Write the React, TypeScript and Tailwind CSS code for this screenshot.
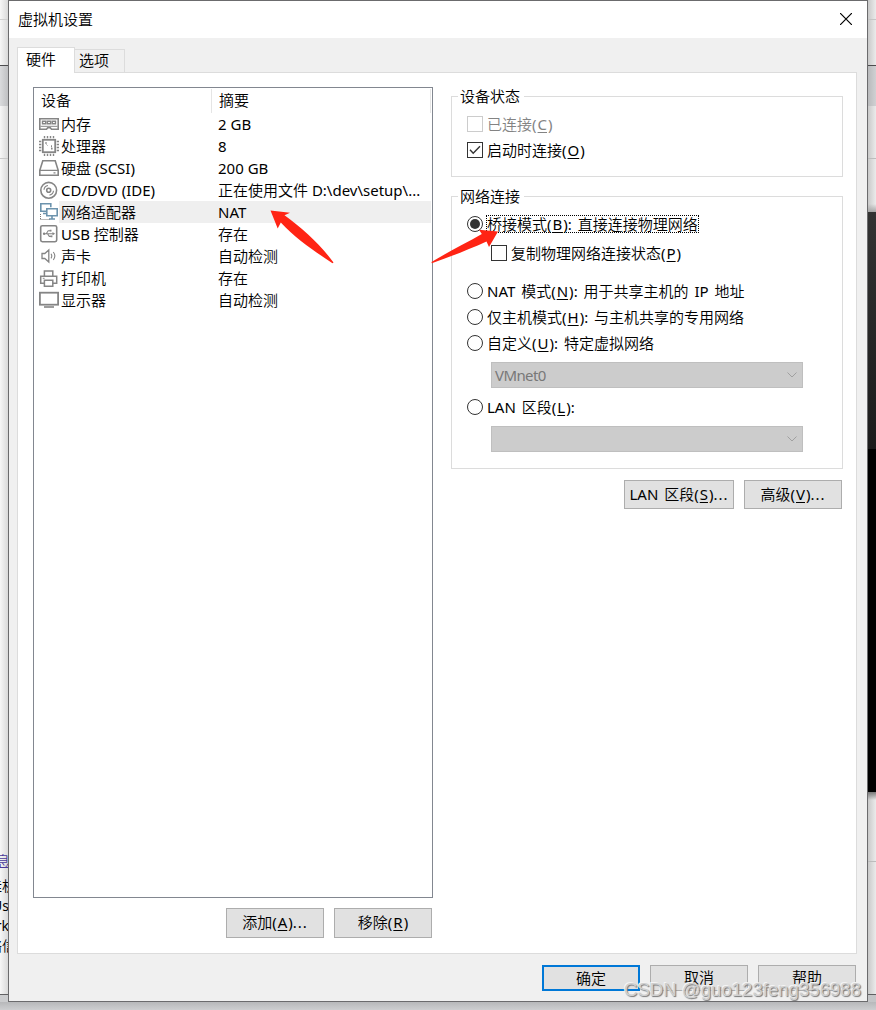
import { useState } from 'react';
import type { ReactNode } from 'react';

const Icon = ({ children }: { children: ReactNode }) => (
  <svg width="20" height="22" viewBox="0 0 20 22" fill="none" stroke="#858585" strokeWidth="1.6" className="block shrink-0">
    {children}
  </svg>
);

const MemoryIcon = () => (
  <Icon>
    <path d="M.8 5.8h18.4v10.4h-6.7l-1.2-1.5H8.7l-1.2 1.5H.8z" />
    <path d="M3.5 8.2h3.2v2.6H3.5zM8.4 8.2h3.2v2.6H8.4zM13.3 8.2h3.2v2.6h-3.2z" strokeWidth="1.4" />
    <path d="M1.5 13.3h17" strokeWidth="1" />
  </Icon>
);

const CpuIcon = () => (
  <Icon>
    <rect x="3.8" y="4.8" width="12.4" height="12.4" strokeWidth="1.8" />
    <path d="M5.5 1v2.3M8.5 1v2.3M11.5 1v2.3M14.5 1v2.3M5.5 18.7V21M8.5 18.7V21M11.5 18.7V21M14.5 18.7V21M0 6.5h2.3M0 9.5h2.3M0 12.5h2.3M0 15.5h2.3M17.7 6.5H20M17.7 9.5H20M17.7 12.5H20M17.7 15.5H20" strokeWidth="1.4" />
    <path d="M6.2 7.2h1.6v1.6H6.2zM12 12.8h1.6v1.6H12z" fill="#858585" stroke="none" />
    <path d="M7.5 9.5l1 1M12.5 10.3v2" strokeWidth="1" />
  </Icon>
);

const DiskIcon = () => (
  <Icon>
    <path d="M3.8 3.8h12.4l3 9.5v4.9H.8v-4.9z" />
    <path d="M.8 13.3h18.4M14.5 15.8h2" strokeWidth="1.2" />
  </Icon>
);

const DiscIcon = () => (
  <Icon>
    <circle cx="9.7" cy="11.3" r="7.9" />
    <circle cx="9.7" cy="11.3" r="2" />
    <path d="M5 10.8a4.8 4.8 0 0 1 4-4.3M14.5 11.8a4.8 4.8 0 0 1-4 4.3" strokeWidth="1.2" />
  </Icon>
);

const NetworkIcon = () => (
  <Icon>
    <g stroke="#6c93ad">
      <path d="M7 10.2H1.8V2.8h10v3.5M4 12.5h3" />
      <path d="M7.8 7.8h10.4v7H7.8zM13 14.8v3M10 18h6" />
    </g>
    <path d="M1.5 13v6M1.5 18.5h10" stroke="#777" strokeWidth="1" strokeDasharray="1 1" />
  </Icon>
);

const UsbIcon = () => (
  <Icon>
    <rect x="1.7" y="2.7" width="16" height="16" rx="1.6" />
    <path d="M5 10.7h10M7.2 10.7l2-3h2.2M8.5 10.7l1.8 2.7h2.2" strokeWidth="1.1" />
    <circle cx="5.1" cy="10.7" r="1.2" fill="#858585" stroke="none" />
    <path d="M13.5 9.1l2.6 1.6-2.6 1.6zM10.7 6.7h1.8v1.8h-1.8zM11.6 12.4h1.8v1.8h-1.8z" fill="#858585" stroke="none" />
  </Icon>
);

const SoundIcon = () => (
  <Icon>
    <path d="M3 8.5h2.8l4-3.6v12.2l-4-3.6H3z" strokeWidth="1.3" />
    <path d="M12 8.7c1 1.5 1 3.2 0 4.7M14.3 7c1.9 2.5 1.9 5.5 0 8" strokeWidth="1.1" />
  </Icon>
);

const PrinterIcon = () => (
  <Icon>
    <path d="M5.4 9V4.1h8.4V9M5.4 16.3H1.7V9.2h16v7.1h-4.2" strokeWidth="1.5" />
    <path d="M5.4 13.2h8.4v6H5.4z" strokeWidth="1.5" />
    <path d="M3.8 11.3h1.8" strokeWidth="1" />
  </Icon>
);

const DisplayIcon = () => (
  <Icon>
    <rect x=".9" y="3.7" width="18.2" height="12" strokeWidth="1.8" />
    <path d="M5 18h10" />
  </Icon>
);

const devices = [
  { name: '内存', summary: '2 GB', icon: <MemoryIcon /> },
  { name: '处理器', summary: '8', icon: <CpuIcon /> },
  { name: '硬盘 (SCSI)', summary: '200 GB', icon: <DiskIcon /> },
  { name: 'CD/DVD (IDE)', summary: '正在使用文件 D:\\dev\\setup\\...', icon: <DiscIcon /> },
  { name: '网络适配器', summary: 'NAT', icon: <NetworkIcon /> },
  { name: 'USB 控制器', summary: '存在', icon: <UsbIcon /> },
  { name: '声卡', summary: '自动检测', icon: <SoundIcon /> },
  { name: '打印机', summary: '存在', icon: <PrinterIcon /> },
  { name: '显示器', summary: '自动检测', icon: <DisplayIcon /> },
];

// Label with an underlined access key in brackets
const Label = ({ text, hotkey, rest = '' }: { text: string; hotkey: string; rest?: string }) => (
  <span className="whitespace-pre [word-spacing:2px]">
    {text}(<span className="mx-px underline underline-offset-2">{hotkey}</span>)
    <span className={rest === '...' ? 'tracking-[1px]' : ''}>{rest}</span>
  </span>
);

const Button = ({ children, className }: { children: ReactNode; className: string }) => (
  <button className={`flex items-center justify-center whitespace-pre border border-[#adadad] bg-[#e1e1e1] pb-0.5 ${className}`}>
    {children}
  </button>
);

const CheckBox = ({ checked, disabled, children }: { checked?: boolean; disabled?: boolean; children: ReactNode }) => (
  <div className={`flex h-[22px] items-center gap-1 ${disabled ? 'text-[#838383]' : ''}`}>
    <span className={`flex size-4 shrink-0 items-center justify-center border bg-white ${disabled ? 'border-[#cccccc]' : 'border-[#333333]'}`}>
      {checked && (
        <svg width="12" height="10" viewBox="0 0 12 10" fill="none" stroke="#333" strokeWidth="1.4">
          <path d="M1 4.8l3.2 3.4L11 1.3" />
        </svg>
      )}
    </span>
    {children}
  </div>
);

interface RadioProps {
  checked: boolean;
  onSelect: () => void;
  children: ReactNode;
}

const Radio = ({ checked, onSelect, children }: RadioProps) => (
  <div className="flex h-[26px] items-center gap-[3px]" onClick={onSelect}>
    <span className="flex size-4 shrink-0 items-center justify-center rounded-full border border-[#333333] bg-white">
      {checked && <span className="size-2.5 rounded-full bg-[#333333]" />}
    </span>
    <span className={`flex h-[18px] items-center border border-dotted ${checked ? 'border-black' : 'border-transparent'}`}>
      {children}
    </span>
  </div>
);

const ComboBox = ({ value }: { value?: string }) => (
  <div className="ml-6 flex h-[26px] w-[312px] items-center justify-between border border-[#bfbfbf] bg-[#cccccc] pl-[3px] pr-[5px] text-[#787878]">
    <span className="tracking-[-0.6px]">{value}</span>
    <svg width="10" height="6" viewBox="0 0 10 6" fill="none" stroke="#a0a0a0">
      <path d="M.5 .5L5 5L9.5 .5" />
    </svg>
  </div>
);

const Group = ({ title, className, children }: { title: string; className: string; children: ReactNode }) => (
  <div className={`w-[392px] border border-[#dcdcdc] pl-[15px] ${className}`}>
    <div className="-ml-[9px] -mt-[12px] flex h-[22px] w-fit items-center bg-white pl-0.5 pr-1">{title}</div>
    {children}
  </div>
);

// Parts of the parent window that stay visible beside the dialog
const LeftEdge = () => (
  <div className="flex h-full w-2 flex-col overflow-hidden bg-gradient-to-r from-[#f7f7f7] to-[#d9d9d9]">
    <div className="h-5 border-b border-[#d0d0d0]" />
    <div className="h-[46px] border-b border-[#4c4c4e]" />
    <div className="h-10 bg-gradient-to-r from-[#dadbdd] to-[#bfc0c2]" />
    <div className="h-[53px] border-b border-[#c8c8c8]" />
    <div className="h-[692px]" />
    <div className="flex w-2 flex-col items-end text-[14px] leading-5 text-black">
      <span className="-mr-0.5 h-[25px] text-[#4a3a9a] underline">息</span>
      <span className="-mr-2 h-5 whitespace-nowrap">挂机</span>
      <span className="-mr-px h-5">Us</span>
      <span className="-mr-px h-5">rk</span>
      <span className="-mr-2 h-5 whitespace-nowrap">络信</span>
    </div>
    <div className="h-[39px] border-b border-[#606062]" />
    <div className="flex-1 bg-[#cbccce]" />
  </div>
);

const RightEdge = () => (
  <div className="flex h-full w-2 flex-col bg-gradient-to-r from-[#c9c9c9] to-[#ebebeb]">
    <div className="h-5 border-b border-[#c5c5c5]" />
    <div className="h-[46px] border-b border-[#4c4c4e]" />
    <div className="h-10 bg-gradient-to-r from-[#b9babc] to-[#d0d1d3]" />
    <div className="h-[53px] border-b border-[#bcbcbc]" />
    <div className="h-[53px] bg-gradient-to-b from-transparent from-85% to-[#a5a5a5]" />
    <div className="h-[237px] bg-gradient-to-b from-[#333333] to-[#1b1b1b]" />
    <div className="h-[343px] bg-black" />
    <div className="h-2 bg-gradient-to-b from-[#777777] to-transparent" />
    <div className="h-[62px] border-b border-[#bcbcbc]" />
    <div className="h-[133px] border-b border-[#606062]" />
    <div className="flex-1 bg-[#c4c5c7]" />
  </div>
);

const App = () => {
  const [selected, setSelected] = useState(4);
  const [mode, setMode] = useState('bridged');

  return (
    <div className="relative h-[1010px] w-[876px] overflow-hidden bg-[#c8c9cb] font-['Noto_Sans','Noto_Sans_CJK_SC_DemiLight','Noto_Sans_CJK_SC',sans-serif] text-[15px] leading-[22px] text-black">
      <div className="flex h-[1002px]">
        <LeftEdge />

        {/* Dialog */}
        <div className="flex w-[860px] shrink-0 flex-col border border-[#6b6b6d] bg-[#f0f0f0]">
          <div className="flex h-[37px] shrink-0 items-center justify-between bg-white pb-0.5 pl-[9px] pr-[15px]">
            <span>虚拟机设置</span>
            <svg width="12" height="12" viewBox="0 0 12 12" stroke="black" strokeWidth="1.2">
              <path d="M0 0L12 12M12 0L0 12" />
            </svg>
          </div>

          {/* Tabs */}
          <div className="flex h-[34px] shrink-0 items-end pl-2">
            <div className="z-10 -mb-px h-[26px] w-[58px] border border-b-0 border-[#dcdcdc] bg-white pl-2 text-[15px]">硬件</div>
            <div className="-ml-px h-[23px] w-[51px] border border-b-0 border-[#dcdcdc] bg-[#f0f0f0] pl-1 leading-[21px]">选项</div>
          </div>

          <div className="mx-2 flex h-[882px] w-[840px] shrink-0 border border-[#dcdcdc] bg-white pl-[15px] pt-3.5">
            {/* Device list */}
            <div className="w-[400px]">
              <div className="h-[811px] border border-[#828790]">
                <div className="flex h-[25px] items-start pt-px">
                  <div className="h-6 w-[178px] border-r border-[#e5e5e5] pl-[7px]">设备</div>
                  <div className="h-6 w-[219px] border-r border-[#e5e5e5] pl-[7px]">摘要</div>
                </div>
                {devices.map((device, index) => (
                  <div key={device.name} className="flex h-[22px] pl-[5px]" onClick={() => setSelected(index)}>
                    {device.icon}
                    <div className={`flex w-[372px] whitespace-pre pl-[2px] ${index === selected ? 'bg-[#efefef]' : ''}`}>
                      <span className="w-[157px]">{device.name}</span>
                      <span>{device.summary}</span>
                    </div>
                  </div>
                ))}
              </div>
              <div className="mt-2.5 flex justify-end gap-2.5 pr-px">
                <Button className="h-[30px] w-[98px]"><Label text="添加" hotkey="A" rest="..." /></Button>
                <Button className="h-[30px] w-[98px]"><Label text="移除" hotkey="R" /></Button>
              </div>
            </div>

            {/* Settings of the selected device */}
            <div className="ml-[18px] mt-[9px] w-[392px]">
              <Group title="设备状态" className="h-[81px]">
                <div className="mt-1.5">
                  <CheckBox disabled><Label text="已连接" hotkey="C" /></CheckBox>
                </div>
                <div className="mt-1">
                  <CheckBox checked><Label text="启动时连接" hotkey="O" /></CheckBox>
                </div>
              </Group>

              <Group title="网络连接" className="mt-[19px] h-[273px]">
                <div className="mt-1">
                  <Radio checked={mode === 'bridged'} onSelect={() => setMode('bridged')}>
                    <Label text="桥接模式" hotkey="B" rest=": 直接连接物理网络" />
                  </Radio>
                </div>
                <div className="ml-6 mt-[5px]">
                  <CheckBox><Label text="复制物理网络连接状态" hotkey="P" /></CheckBox>
                </div>
                <div className="mt-3.5">
                  <Radio checked={mode === 'nat'} onSelect={() => setMode('nat')}>
                    <Label text="NAT 模式" hotkey="N" rest=": 用于共享主机的 IP 地址" />
                  </Radio>
                  <Radio checked={mode === 'host'} onSelect={() => setMode('host')}>
                    <Label text="仅主机模式" hotkey="H" rest=": 与主机共享的专用网络" />
                  </Radio>
                  <Radio checked={mode === 'custom'} onSelect={() => setMode('custom')}>
                    <Label text="自定义" hotkey="U" rest=": 特定虚拟网络" />
                  </Radio>
                </div>
                <div className="mt-1.5 flex flex-col gap-1.5">
                  <ComboBox value="VMnet0" />
                  <Radio checked={mode === 'lan'} onSelect={() => setMode('lan')}>
                    <Label text="LAN 区段" hotkey="L" rest=":" />
                  </Radio>
                  <ComboBox />
                </div>
              </Group>

              <div className="mt-[11px] flex justify-end gap-2.5 pr-px">
                <Button className="h-[29px] w-[110px]"><Label text="LAN 区段" hotkey="S" rest="..." /></Button>
                <Button className="h-[29px] w-[98px]"><Label text="高级" hotkey="V" rest="..." /></Button>
              </div>
            </div>
          </div>

          <div className="mt-[11px] flex justify-end gap-2.5 pr-[11px]">
            <button className="flex h-[26px] w-[98px] items-center justify-center border-2 border-[#0078d7] bg-[#e1e1e1] pb-px">确定</button>
            <Button className="h-[26px] w-[98px]">取消</Button>
            <Button className="h-[26px] w-[98px]">帮助</Button>
          </div>
        </div>

        <RightEdge />
      </div>

      <div className="h-2 bg-gradient-to-b from-[#b7b8ba] to-[#cdced0]" />

      {/* Arrows drawn over the dialog */}
      <svg className="pointer-events-none absolute left-0 top-0" width="876" height="300" viewBox="0 0 876 300" fill="#ff2414">
        <path d="M270.5 210.5L290 212.7L284.5 215.3C303 229 320 244 333.5 262.5L332.5 263.3C316 252 297 240 280.8 222.5L277.7 228.5Z" />
        <path d="M498 231.5L479 229.8L481.8 234C466 243 448 252 431.5 262L431.8 263.3C449 257 468 250 486.5 241.5L489 247Z" />
      </svg>

      <div className="pointer-events-none absolute left-[624px] top-[979px] whitespace-nowrap font-['Liberation_Sans',sans-serif] text-[18.6px] text-[#cfcfcf] [text-shadow:1px_1px_1px_#777,-1px_-1px_0_#f4f4f4]">
        CSDN @guo123feng356988
      </div>
    </div>
  );
};

export default App;
